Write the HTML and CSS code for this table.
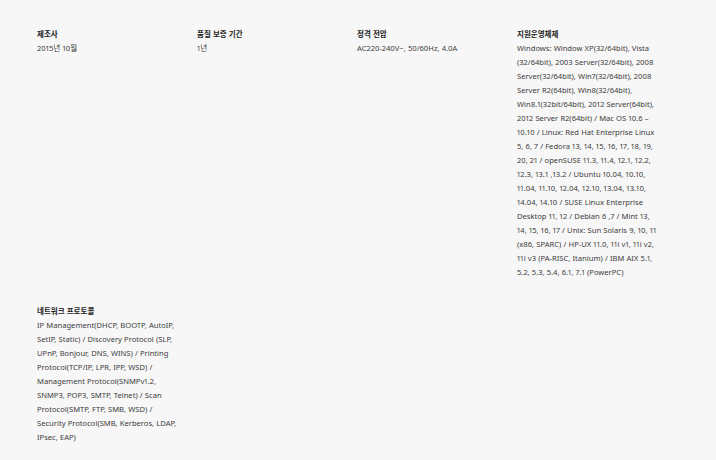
FILE: index.html
```html
<!DOCTYPE html>
<html lang="ko">
<head>
<meta charset="utf-8">
<title>제품 사양</title>
<link rel="stylesheet" href="styles.css">
</head>
<body>
<div class="spec">
  <div class="spec-row">
    <div class="spec-item">
      <div class="spec-title">제조사</div>
      <div class="spec-value">2015년 10월</div>
    </div>
    <div class="spec-item">
      <div class="spec-title">품질 보증 기간</div>
      <div class="spec-value">1년</div>
    </div>
    <div class="spec-item">
      <div class="spec-title">정격 전압</div>
      <div class="spec-value">AC220-240V~, 50/60Hz, 4.0A</div>
    </div>
    <div class="spec-item">
      <div class="spec-title">지원운영체제</div>
      <div class="spec-value">Windows: Window XP(32/64bit), Vista (32/64bit), 2003 Server(32/64bit), 2008 Server(32/64bit), Win7(32/64bit), 2008 Server R2(64bit), Win8(32/64bit), Win8.1(32bit/64bit), 2012 Server(64bit), 2012 Server R2(64bit) / Mac OS 10.6 – 10.10 / Linux: Red Hat Enterprise Linux 5, 6, 7 / Fedora 13, 14, 15, 16, 17, 18, 19, 20, 21 / openSUSE 11.3, 11.4, 12.1, 12.2, 12.3, 13.1 ,13.2 / Ubuntu 10.04, 10.10, 11.04, 11.10, 12.04, 12.10, 13.04, 13.10, 14.04, 14.10 / SUSE Linux Enterprise Desktop 11, 12 / Debian 6 ,7 / Mint 13, 14, 15, 16, 17 / Unix: Sun Solaris 9, 10, 11 (x86, SPARC) / HP-UX 11.0, 11i v1, 11i v2, 11i v3 (PA-RISC, Itanium) / IBM AIX 5.1, 5.2, 5.3, 5.4, 6.1, 7.1 (PowerPC)</div>
    </div>
  </div>
  <div class="spec-row">
    <div class="spec-item">
      <div class="spec-title">네트워크 프로토콜</div>
      <div class="spec-value">IP Management(DHCP, BOOTP, AutoIP, SetIP, Static) / Discovery Protocol (SLP, UPnP, Bonjour, DNS, WINS) / Printing Protocol(TCP/IP, LPR, IPP, WSD) / Management Protocol(SNMPv1.2, SNMP3, POP3, SMTP, Telnet) / Scan Protocol(SMTP, FTP, SMB, WSD) / Security Protocol(SMB, Kerberos, LDAP, IPsec, EAP)</div>
    </div>
  </div>
</div>
</body>
</html>
```

FILE: styles.css
```css
html, body {
  margin: 0;
  padding: 0;
  background: #f7f7f7;
}

body {
  font-family: "Noto Sans", "Noto Sans CJK KR", sans-serif;
  font-size: 7.6px;
  line-height: 14px;
  color: #3c3c3c;
  font-variant-numeric: proportional-nums;
}

.spec {
  padding: 27px 39px 0 37px;
  display: flex;
  flex-direction: column;
  gap: 25px;
}

.spec-row {
  display: grid;
  grid-template-columns: repeat(4, 160px);
}

.spec-item {
  padding-right: 18px;
}

.spec-title {
  font-weight: bold;
  font-size: 7.5px;
  color: #1c1c1c;
  font-family: "Noto Sans CJK KR", "Noto Sans", sans-serif;
}

.spec-value {
  color: #3c3c3c;
  word-spacing: 0.2px;
}
```
